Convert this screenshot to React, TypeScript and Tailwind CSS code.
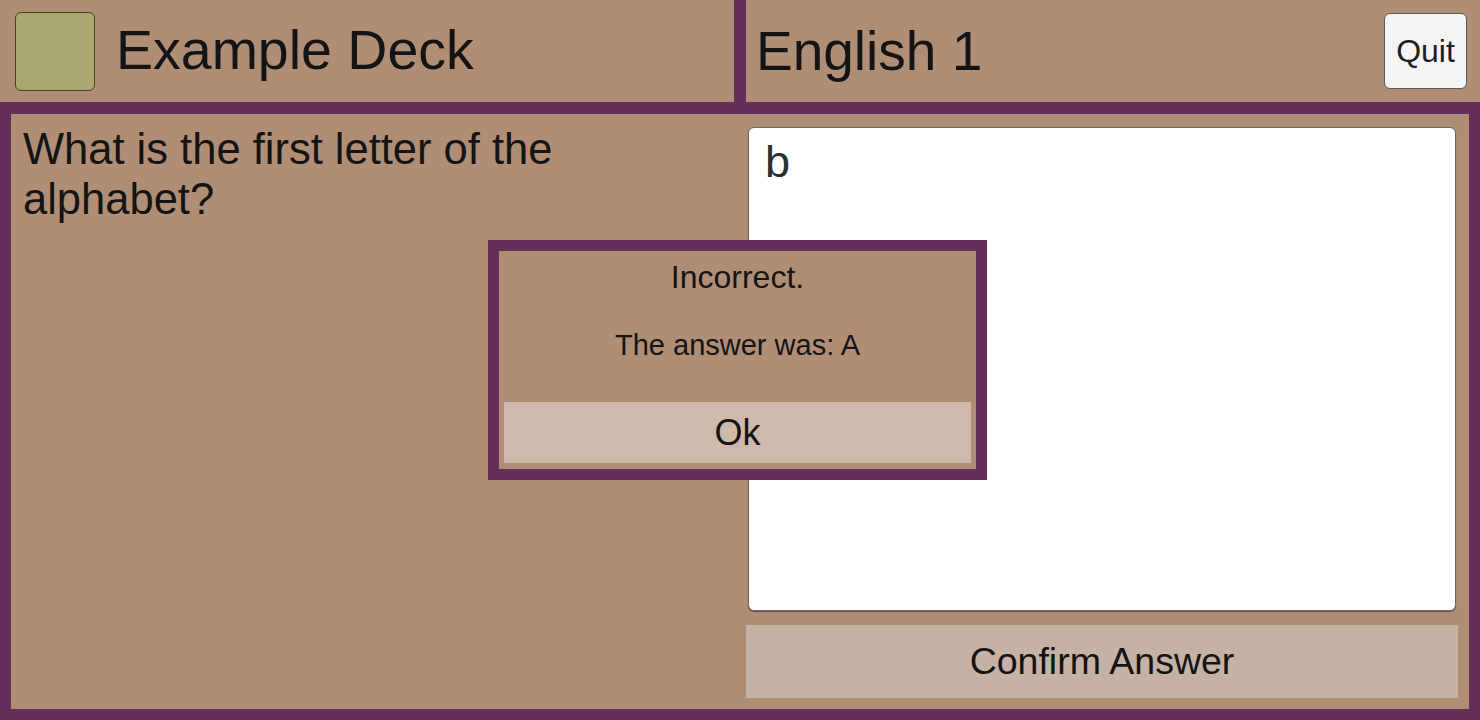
import React from "react";

export default function App() {
  return (
    <div className="relative w-[1480px] h-[720px] overflow-hidden bg-[#b08e75] text-[#141414] font-['Liberation_Sans',Arial,sans-serif]">
      {/* Top bar */}
      <div className="flex h-[102px]">
        <div className="flex w-[734px] items-center pl-[15px]">
          <div className="h-[79px] w-[80px] rounded-[6px] border border-[#4a3e2a] bg-[#a9a86f]" />
          <div className="ml-[21px] text-[55.5px] leading-none">Example Deck</div>
        </div>
        <div className="w-[12px] bg-[#652f5b]" />
        <div className="flex flex-1 items-center justify-between pl-[10px] pr-[13px]">
          <div className="text-[55px] leading-none">English 1</div>
          <button className="flex h-[76px] w-[83px] items-center justify-center rounded-[6px] border border-[#5a5a5a] bg-[#f4f4f4] text-[32px] text-[#1e1e1e] font-['Liberation_Sans',Arial,sans-serif]">
            Quit
          </button>
        </div>
      </div>

      {/* Main */}
      <div className="flex h-[618px] border-[11px] border-t-[12px] border-[#652f5b]">
        <div className="w-[729px] pl-[12px] pt-[10px]">
          <div className="w-[600px] text-[43.5px] leading-[50px]">
            What is the first letter of the alphabet?
          </div>
        </div>
        <div className="flex flex-1 flex-col pl-[6px] pr-[11px] pt-[13px] pb-[11px]">
          <div className="mx-[2px] flex-1 rounded-[6px] border border-[#6a6a6a] bg-white px-[16px] pt-[8px] text-[45px] leading-[52px] text-[#2e2e2e] shadow-[0_1px_1px_rgba(0,0,0,0.45)]">
            b
          </div>
          <button className="mt-[14px] flex h-[73px] w-full items-center justify-center bg-[#c6b2a4] text-[37.5px] text-[#141414] font-['Liberation_Sans',Arial,sans-serif]">
            Confirm Answer
          </button>
        </div>
      </div>

      {/* Dialog */}
      <div className="absolute left-[488px] top-[240px] flex h-[240px] w-[499px] flex-col border-[11px] border-[#652f5b] bg-[#b08e75] px-[5px] pb-[6px]">
        <div className="flex flex-1 flex-col items-center">
          <div className="mt-[8px] text-[32px] leading-[36px]">Incorrect.</div>
          <div className="mt-[33px] text-[29px] leading-[34px]">The answer was: A</div>
        </div>
        <button className="flex h-[61px] w-full items-center justify-center bg-[#cfb9ac] text-[36px] text-[#141414] font-['Liberation_Sans',Arial,sans-serif]">
          Ok
        </button>
      </div>
    </div>
  );
}
